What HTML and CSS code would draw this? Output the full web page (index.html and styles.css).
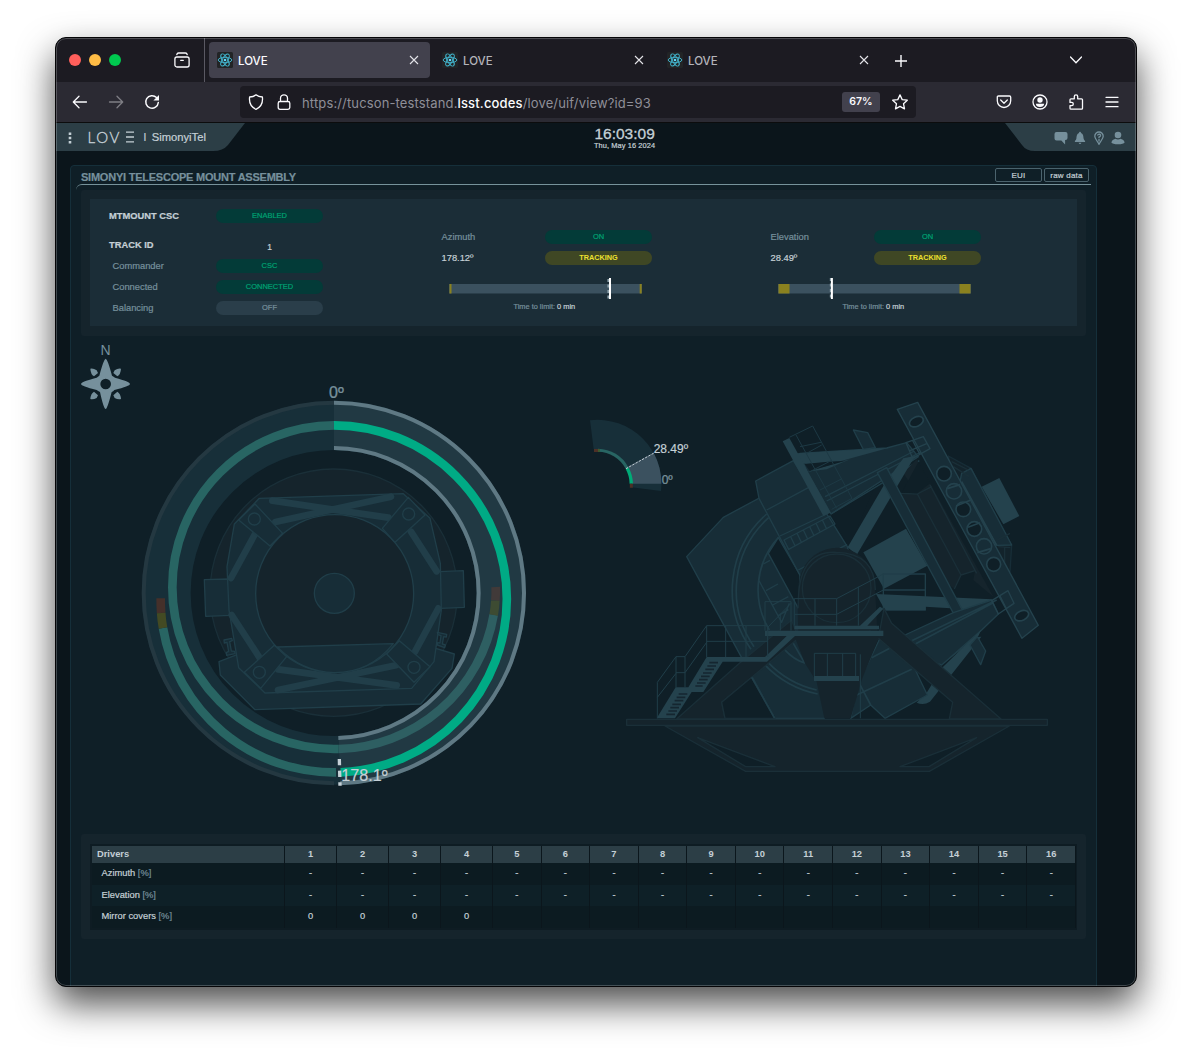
FILE: index.html
```html
<!DOCTYPE html>
<html lang="en">
<head>
<meta charset="utf-8">
<title>LOVE</title>
<link rel="stylesheet" href="styles.css">
</head>
<body>
<svg class="defs" aria-hidden="true">
  <symbol id="atom" viewBox="0 0 16 16">
    <rect width="16" height="16" rx="1.5" fill="#222426"/>
    <g fill="none" stroke="#41b4cd" stroke-width=".95">
      <ellipse cx="8" cy="8" rx="6.8" ry="2.7"/>
      <ellipse cx="8" cy="8" rx="6.8" ry="2.7" transform="rotate(60 8 8)"/>
      <ellipse cx="8" cy="8" rx="6.8" ry="2.7" transform="rotate(120 8 8)"/>
    </g>
    <circle cx="8" cy="8" r="1.3" fill="#61dafb"/>
  </symbol>
  <symbol id="close" viewBox="0 0 10 10"><path d="M1 1l8 8M9 1l-8 8" fill="none" stroke="currentColor" stroke-width="1.1"/></symbol>
</svg>

<div class="window">
  <div class="tabbar">
    <div class="lights"><i class="red"></i><i class="amber"></i><i class="green"></i></div>
    <svg class="recent" viewBox="0 0 16 16"><g fill="none" stroke="#fbfbfe" stroke-width="1.3" stroke-linecap="round"><rect x=".9" y="5" width="14.2" height="10" rx="2"/><path d="M2.8 2.6q.3-1.6 1.8-1.6h6.8q1.5 0 1.8 1.6M6.7 8.3h2.6"/></g></svg>
    <div class="tab active"><svg class="fav"><use href="#atom"/></svg><span>LOVE</span><svg class="x"><use href="#close"/></svg></div>
    <div class="tab"><svg class="fav"><use href="#atom"/></svg><span>LOVE</span><svg class="x"><use href="#close"/></svg></div>
    <div class="tab"><svg class="fav"><use href="#atom"/></svg><span>LOVE</span><svg class="x"><use href="#close"/></svg></div>
    <svg class="plus" viewBox="0 0 12 12"><path d="M6 0v12M0 6h12" stroke="#fbfbfe" stroke-width="1.4"/></svg>
    <svg class="chev" viewBox="0 0 12 12"><path d="M.5 3L6 8.7 11.500 3" fill="none" stroke="#fbfbfe" stroke-width="1.3" stroke-linecap="round"/></svg>
  </div>

  <div class="toolbar">
    <div class="nav">
      <svg viewBox="0 0 16 16"><path d="M14.500 8H1.500M7 2.300L1.300 8 7 13.700" class="line"/></svg>
      <svg viewBox="0 0 16 16" class="off"><path d="M1.500 8h13M9 2.300L14.700 8 9 13.700" class="line"/></svg>
      <svg viewBox="0 0 16 16"><path d="M14.300 8.500a6.300 6.300 0 1 1-1.800-5" class="line thick"/><path d="M15 .9v5.600H9.400z" fill="#fbfbfe"/></svg>
    </div>
    <div class="urlbar">
      <svg viewBox="0 0 16 16"><path d="M8 .8c1.800 1.500 3.800 2.100 6.400 2.200.7 5.800-2 10.300-6.400 12.300C3.600 13.300.9 8.800 1.600 3 4.200 2.900 6.200 2.300 8 .8z" class="line"/></svg>
      <svg viewBox="0 0 16 16"><path d="M4.500 7.500V4.300a3.500 3.500 0 0 1 7 0v3.200M4 7.500h8q1.800 0 1.800 1.800v4.200q0 1.800-1.800 1.800H4q-1.800 0-1.800-1.800V9.300Q2.200 7.500 4 7.500z" class="line"/></svg>
      <span class="url">https://tucson-teststand.<b>lsst.codes</b>/love/uif/view?id=93</span>
      <span class="zoom">67%</span>
      <svg class="star" viewBox="0 0 16 16"><path d="M8 .9l2.200 4.700 5.100.6-3.800 3.500 1 5.200L8 12.400l-4.500 2.500 1-5.200L.7 6.200l5.100-.6z" class="line" stroke-linejoin="round"/></svg>
    </div>
    <div class="tools">
      <svg viewBox="0 0 16 16"><path d="M2.500 2h11q1.200 0 1.200 1.200v3.600a6.700 6.700 0 0 1-13.400 0V3.200Q1.300 2 2.500 2zM4.700 6L8 9.200 11.300 6" class="line"/></svg>
      <svg viewBox="0 0 16 16"><circle cx="8" cy="8" r="7" class="line"/><circle cx="8" cy="6" r="2.700" fill="#fbfbfe"/><path d="M3.800 9.700h8.400q-.5 3.200-4.200 3.200t-4.200-3.200z" fill="#fbfbfe"/></svg>
      <svg viewBox="0 0 16 16"><path d="M2 5.800q0-1 1-1h3.300V2.600a1.700 1.700 0 0 1 3.400 0v2.200H13.500q1 0 1 1v8.400q0 1-1 1H3q-1 0-1-1v-2.600h1.700a1.600 1.600 0 0 0 0-3.200H2z" class="line"/></svg>
      <svg viewBox="0 0 16 16"><path d="M2 3.300h12M2 8h12M2 12.700h12" class="line"/></svg>
    </div>
  </div>

  <div class="page">
    <header class="top">
      <div class="brand">
        <svg class="plate" viewBox="0 0 189 28"><path d="M0 0H189L172 22Q167 28 157 28H0Z" fill="#2c3e46"/></svg>
        <svg class="dots" viewBox="0 0 4 12"><path d="M.7 .5h2.600v2.500H.7zM.7 4.700h2.600v2.500H.7zM.7 8.900h2.600v2.500H.7z" fill="#c3d0d5"/></svg>
        <span class="logo">LOV</span>
        <svg class="bars" viewBox="0 0 8 12"><path d="M0 1.100h8M0 6h8M0 10.900h8" stroke="#c3d0d5" stroke-width="1.400"/></svg>
        <span class="sep">I</span>
        <span class="view">SimonyiTel</span>
      </div>
      <div class="clock"><div class="time">16:03:09</div><div class="date">Thu, May 16 2024</div></div>
      <div class="user">
        <svg class="plate" viewBox="0 0 131 28"><path d="M0 0L17 22Q21 28 30 28H131V0Z" fill="#2c3e46"/></svg>
        <svg viewBox="0 0 14 14"><path d="M2.500 1h9q2 0 2 2v4q0 2-2 2h-.4v4.500L7.300 9.500H2.500Q.5 9.500 .5 7.500V3q0-2 2-2z" fill="#76909c"/></svg>
        <svg viewBox="0 0 14 14"><path d="M7 .7q1 0 1 1.200c2.500 1 2.300 3.700 2.600 5.600.2 1.500 1.600 2 1.600 3.500H1.800c0-1.500 1.400-2 1.600-3.500.3-1.900.1-4.600 2.600-5.600Q6 .7 7 .7zM5.600 11.700h2.800Q8 13 7 13t-1.400-1.300z" fill="#76909c"/></svg>
        <svg viewBox="0 0 14 14"><path d="M7 1a4.200 4.200 0 0 1 4.200 4.300c0 2.500-2.600 4.600-4.200 8-1.600-3.400-4.200-5.500-4.200-8A4.200 4.200 0 0 1 7 1zM5.500 4.400Q6 3.100 7.300 3.200q1.500.4 1.200 1.500Q8.200 5.500 7 6v1.200M7 8v2.500" fill="none" stroke="#76909c" stroke-width="1.300"/></svg>
        <svg viewBox="0 0 14 14"><circle cx="7" cy="4" r="3.300" fill="#76909c"/><path d="M.3 11.200Q1 8.600 4.400 7.800q2.600 1.500 5.200 0 3.400.8 4.100 3.400Q12.500 13.300 7 13.300T.3 11.200z" fill="#76909c"/></svg>
      </div>
    </header>

    <section class="panel">
      <div class="titlebar"><h1>SIMONYI TELESCOPE MOUNT ASSEMBLY</h1><button class="eui">EUI</button><button>raw data</button></div>
      <div class="rule"></div>

      <div class="summary">
        <div class="status">
          <div class="csc">
            <b>MTMOUNT CSC</b><span class="pill ok">ENABLED</span>
            <b>TRACK ID</b><span class="num">1</span>
            <label>Commander</label><span class="pill ok">CSC</span>
            <label>Connected</label><span class="pill ok">CONNECTED</span>
            <label>Balancing</label><span class="pill off">OFF</span>
          </div>
          <div class="axis">
            <div class="pair"><label>Azimuth</label><span class="pill ok">ON</span><span class="val">178.12º</span><span class="pill warn">TRACKING</span></div>
            <svg class="range" viewBox="0 0 193 22"><rect x="0" y="6" width="193" height="9.500" fill="#3b515f"/><path d="M.5 6h2v9.500h-2zM190.700 6h2v9.500h-2z" fill="#8a811f"/><path d="M159.400 1v21" stroke="#8fa3ad" stroke-width="2" stroke-dasharray="3 2.500"/><path d="M161 0v21" stroke="#fff" stroke-width="2"/></svg>
            <p class="limit">Time to limit: <em>0 min</em></p>
          </div>
          <div class="axis">
            <div class="pair"><label>Elevation</label><span class="pill ok">ON</span><span class="val">28.49º</span><span class="pill warn">TRACKING</span></div>
            <svg class="range" viewBox="0 0 193 22"><rect x="0" y="6" width="193" height="9.500" fill="#3b515f"/><path d="M.5 6h11v9.500H.5zM181.500 6h11v9.500h-11z" fill="#8a811f"/><path d="M52.600 0v21" stroke="#8fa3ad" stroke-width="1.500" stroke-dasharray="3 2.500"/><path d="M53.900 0v21" stroke="#fff" stroke-width="2"/></svg>
            <p class="limit">Time to limit: <em>0 min</em></p>
          </div>
        </div>
      </div>

      <div class="diagrams">
        <svg class="azimuth" viewBox="-177 -132 1500 1494">
          <!-- compass -->
          <g transform="translate(-180 -570)" fill="#76909c">
            <text x="107" y="496" font-size="42" text-anchor="middle" class="thin">N</text>
            <path fill-rule="evenodd" d="M107 506Q113 508 126 557Q131 560 135 563Q180 575 180 582Q180 588 133 600Q130 604 125 606Q112 657 107 657Q101 657 90 606Q84 603 80 600Q33 588 33 582Q33 575 80 563Q84 560 88 557Q101 508 107 506ZM107 566A16 16 0 1 0 107 598A16 16 0 1 0 107 566Z"/>
            <path d="M61 536q9-2 19 5l4 8-12 10q-10-6-11-23zM153 536q-9-2-19 5l-4 8 12 10q10-6 11-23zM61 627q9 2 19-3l4-8-12-11q-10 6-11 22zM153 627q-9 2-19-3l-4-8 12-11q10 6 11 22z"/>
          </g>

          <!-- travel rings -->
          <circle cx="611" cy="639" r="502" fill="none" stroke="#172f39" stroke-width="146"/>
          <path d="M612 62A577 577 0 0 1 1188 639A577 577 0 0 1 631 1216L626 1068A429 429 0 0 0 1040 639A429 429 0 0 0 612 210Z" fill="#213943"/>
          <path d="M612 68A571 571 0 0 0 612 1210" fill="none" stroke="#243841" stroke-width="12"/>
          <g fill="none" stroke-width="12" stroke="#5f7984">
            <path d="M612 68A571 571 0 0 1 1182 639A571 571 0 0 1 631 1210"/>
            <path d="M612 204A435 435 0 0 1 1046 639A435 435 0 0 1 625 1074"/>
          </g>

          <!-- telescope seen from above -->
          <g fill="#172d37" stroke="#203e49" stroke-width="4" stroke-linejoin="round">
            <circle cx="611" cy="638" r="371" fill="#15242c" stroke="#1a2f38"/>
            <path d="M271 885L267 845 345 815 900 800 973 822 966 865 872 972 375 989Z"/>
            <path d="M223 599L295 597 299 706 227 709ZM930 575L1000 572 1003 682 932 685Z"/>
            <path d="M388 355L820 341 900 415 931 550 934 690 912 845 845 925 405 939 326 863 297 690 291 560 313 432Z"/>
            <g stroke="#213e49" stroke-width="20" stroke-linecap="round">
              <path d="M427 362L775 413M436 426L783 350M445 868L800 916M444 930L798 856M375 462L303 594M843 455L920 574M305 705L388 832M925 685L855 815" fill="none"/>
            </g>
            <circle cx="614" cy="641" r="237" fill="#15242c"/>
            <path d="M442 801L790 791Q720 878 614 878 515 876 442 801Z"/>
            <path d="M326 420L375 372 458 460 420 498ZM835 352L885 405 795 487 757 445ZM343 877L433 796 470 830 392 925ZM770 822L808 782 900 860 852 907Z"/>
            <circle cx="373" cy="417" r="18"/><circle cx="836" cy="402" r="18"/><circle cx="388" cy="877" r="18"/><circle cx="852" cy="862" r="18"/>
            <circle cx="613" cy="640" r="60"/>
            <path d="M282 780l23-5 2 7-8 3 5 28 10 1 1 7-25 5-1-8 7-4-5-27-8 2zM922 757l28 6-1 8-8-1-4 22 9 3-2 8-22-8 1-7 7 1 3-22-9-3z"/>
          </g>

          <!-- cable wrap -->
          <g fill="none" stroke-width="26">
            <path d="M1091 704A485 485 0 0 1 626 1107" stroke="#2e5f62"/>
            <path d="M626 1107L612 1107A485.500 485.500 0 0 1 127 621.500A485.500 485.500 0 0 1 612 136" stroke="#286563"/>
            <path d="M99 744A520 520 0 0 0 618 1177" stroke="#286563"/>
            <path d="M612 136A519 520.500 0 0 1 1130.500 656.500A519 520.500 0 0 1 632 1177" stroke="#00ab85"/>
            <path d="M92 655Q92 678 93.500 699" stroke="#45302a"/>
            <path d="M93.500 699Q95 722 99 744" stroke="#434a23"/>
            <path d="M1097 621Q1098 642 1096 662" stroke="#413a39"/>
            <path d="M1096 662Q1095 684 1091 705" stroke="#3d4b32"/>
          </g>
          <path d="M628 1137L630 1217" stroke="#c5d0d6" stroke-width="10" stroke-dasharray="19 16"/>
          <text x="597" y="54" font-size="48" fill="#76909c">0º</text>
          <text x="634" y="1203" font-size="48.500" fill="#c5d0d6">178.1º</text>
        </svg>

        <svg class="elevation" viewBox="-207 -162 1575 1494">
          <!-- elevation gauge -->
          <g transform="translate(-210 30)">
            <path d="M60 61A191 191 0 0 1 273 273L184 262 178 250A100 100 0 0 0 71 147Z" fill="#172f39"/>
            <path d="M250.700 158.400A192 192 0 0 1 274 251L186 251Q186 225 170 202Z" fill="#3b515f"/>
            <g fill="none" stroke-width="9">
              <path d="M84 150.500A101 101 0 0 1 171 204" stroke="#286563"/>
              <path d="M171 204A101 101 0 0 1 184 251" stroke="#00ab77" stroke-width="10"/>
              <path d="M72 151.500h12M184 251v12" stroke="#4d3026"/>
              <path d="M84 151.500h6" stroke="#3b5a30"/>
            </g>
            <path d="M168 206L252 159" stroke="#c5d0d6" stroke-width="3" stroke-dasharray="7 4"/>
            <text x="251" y="158" font-size="36" fill="#c5d0d6">28.49º</text>
            <text x="275" y="251" font-size="36" fill="#76909c">0º</text>
          </g>

          <g stroke-linejoin="round" stroke-width="4">
            <!-- mirror cell -->
            <path d="M140 500L250 382 375 315 620 470 700 760 553 985 404 985Z" fill="#172d37" stroke="#203e49"/>
            <g fill="none" stroke="#203e49" stroke-width="5">
              <path d="M380 372A306 306 0 0 0 333 778M386 383A294 294 0 0 0 342 770M415 443A232 232 0 0 0 388 720M373 823A306 306 0 0 0 533 912M384 817A294 294 0 0 0 530 900M433 778Q460 808 494 819L457 755"/>
            </g>
            <path d="M415 443L480 555 475 655 385 490Z" fill="#0f1f27" stroke="#203e49"/>
            <path d="M357 572L425 697 448 640M370 522l20-11M378 602l36-20M398 645l47-25M415 677l30-18" fill="none" stroke="#203e49"/>

            <!-- upper tube -->
            <path d="M347 273L460 212 622 470 640 540 482 560 357 325Z" fill="#172d37" stroke="#203e49"/>
            <path d="M380 360L505 293M420 438L560 372M475 540L622 463M432 450L570 378 585 402 446 478ZM452 440l13 27M471 430l13 27M490 420l13 27M509 410l13 27M528 400l13 27M547 390l13 27" fill="none" stroke="#203e49"/>
            <path d="M573 372L700 300 627 472Z" fill="#0f1f27" stroke="none"/>
            <path d="M480 190L740 174 800 158 835 200 573 372 500 245Z" fill="#172d37" stroke="#203e49"/>
            <path d="M470 190L745 174 600 214 500 222 480 218ZM500 245L630 208 560 238Z" fill="#24424d"/>
            <path d="M494 222l70-7 50-2-105 30z" fill="#0f1f27"/>
            <path d="M555 320L823 183M560 333L870 172M573 372L838 212" fill="none" stroke="#203e49"/>
            <path d="M448 142L518 108 636 325 575 358M468 135L590 355M480 170L543 157M500 190l45-25M510 245l65-34M540 300l66-34" fill="none" stroke="#1d3944" stroke-width="3"/>
            <path d="M428 154L448 144 572 368 550 378Z" fill="#24424d"/>
            <path d="M640 120L683 128 706 173 670 178Z" fill="#172d37" stroke="#203e49"/>

            <!-- primary mirror assembly -->
            <path d="M830 208L1060 620 1000 570 1005 542 963 555 943 597 900 560 783 310 832 312 790 250Z" fill="#15242c"/>
            <path d="M783 310L832 312 875 290M832 312L963 555 1005 542M963 555L943 597M870 285L1010 550" fill="none" stroke="#1a2f38"/>
            <path d="M835 216L870 280 832 310 785 308Z" fill="#0f1f27"/>
            <path d="M790 205L825 198 650 495 623 472 735 280Z" fill="#24424d"/>
            <path d="M670 487L798 416 862 527 732 596Z" fill="#24424d"/>
            <path d="M730 552h126v108h-126zM730 600h126" fill="none" stroke="#203e49"/>
            <path d="M708 612L1055 628 1060 640 1020 660 856 650 856 660 735 660Z" fill="#24424d"/>
            <path d="M712 248L740 233 982 688 955 697Z" fill="#172d37" stroke="#203e49"/>

            <!-- lower truss -->
            <path d="M1000 742L1024 740 870 935Q850 948 830 938L862 905 905 835Z" fill="#24424d"/>
            <path d="M795 735L940 668 1055 630 1075 672 1025 720 905 825 800 790Z" fill="#172d37" stroke="#203e49"/>
            <path d="M1025 718L1000 745 905 825 1015 738Z" fill="#24424d"/>
            <path d="M815 752L1070 630M820 765L1060 638" fill="none" stroke="#203e49" stroke-width="5"/>
            <path d="M990 765L1012 740 1037 783 1022 824Z" fill="#172d37" stroke="#203e49"/>
            <path d="M720 745L825 838 862 915 735 985 692 945 632 985 655 880Z" fill="#172d37" stroke="#203e49"/>
            <path d="M695 803L752 773M650 915L815 838M658 880L692 945" fill="none" stroke="#203e49" stroke-width="5"/>

            <!-- top end -->
            <path d="M925 198L993 235 1115 465 1110 545 1065 535 960 400Z" fill="#13232b" stroke="#172d37"/>
            <path d="M965 250L993 235 1115 465 1070 466 960 275Z" fill="#172d37" stroke="#203e49"/>
            <path d="M1025 290L1078 264 1138 378 1090 403Z" fill="#24424d"/>
            <path d="M935 215l50 25M940 230l48 30M1072 450l38-20M1075 470l36 3M1094 470v65M1070 480l-3 55" fill="none" stroke="#1a2f38"/>
            <path d="M772 58L833 37 1195 706 1146 745Z" fill="#172d37" stroke="#24424d"/>
            <g fill="#0f1f27" stroke="#24424d" stroke-width="5">
              <ellipse cx="829" cy="95" rx="22" ry="14" transform="rotate(-25 829 95)"/>
              <ellipse cx="1145" cy="677" rx="22" ry="14" transform="rotate(-25 1145 677)"/>
              <circle cx="912" cy="251" r="22"/><circle cx="942" cy="304" r="23" fill="#172d37"/><circle cx="970" cy="358" r="22"/><circle cx="1003" cy="417" r="22"/><circle cx="1032" cy="469" r="23" fill="#172d37"/><circle cx="1061" cy="523" r="21"/>
            </g>
            <path d="M922 296l38-12M948 348l43-17M984 412l36-14M1012 488l40-12M965 275L1070 466" fill="none" stroke="#24424d" stroke-width="5"/>
            <path d="M798 158L850 140 870 176 818 205ZM818 152l22 42M810 182l52-22M1055 632L1104 602 1122 640 1075 672ZM1080 618l20 40" fill="none" stroke="#24424d"/>

            <!-- pier -->
            <path d="M110 987L300 818 455 690 475 745 245 937 255 987ZM715 745L732 655 755 700 1083 987 928 987 938 937Z" fill="#15242c" stroke="#1a2f38"/>
            <path d="M245 937L335 862 404 985 255 985Z" fill="#0f1f27" stroke="#1a2f38"/>
            <path d="M335 862L404 985" stroke="#203e49" stroke-width="5"/>
            <path d="M462 735L720 735 665 870 632 985 553 985 530 875 495 820Z" fill="#15242c"/>
            <path d="M475 722Q470 620 480 560A115 118 0 0 1 704 570L712 722Z" fill="#15242c"/>
            <circle cx="590" cy="595" r="103" fill="#15242c" stroke="#1a2f38"/>
            <path d="M475 655Q470 480 590 487 705 490 706 600" fill="none" stroke="#1a2f38"/>

            <!-- base -->
            <path d="M75 1008L317 1144H868L1108 1008Z" fill="#15242c" stroke="#1a2f38"/>
            <path d="M173 1043L317 1130H405ZM1010 1043L867 1130H780Z" fill="#0f1f27" stroke="#1a2f38"/>
            <rect x="-40" y="988" width="1262" height="18" fill="#15242c" stroke="#1a2f38"/>

            <!-- platforms, stairs and rails -->
            <path d="M375 722H730V738H465L381 815H248L190 906H155L105 985H50L107 892H145L200 801H375L440 738H375ZM463 707H717V718H463ZM522 858H657V873H522ZM660 707L720 650 730 656 682 707Z" fill="#24424d"/>
            <path d="M208 818h26M202 828h26M196 838h26M189 849h26M183 859h26M177 869h26M171 879h26M166 888h22M116 912h26M110 922h26M104 932h26M97 943h26M91 953h26M85 963h26M79 973h26" stroke="#152630" stroke-width="5"/>
            <path d="M200 801V707H383V801M200 754H383M257 707V801M318 707V801M200 707L135 800H108V893M135 800V893M108 848H135L200 757M108 800L52 877V985M108 850L52 922M375 722V635H453V722M383 712L453 640M421 670V722M463 707V626H590V707M525 626V707M463 673H590L730 600M590 626L730 552M655 590V707M523 858V790H647V858M562 790V858M608 790V858M661 793V985" fill="none" stroke="#203e49" stroke-width="3"/>
          </g>
        </svg>
      </div>

      <div class="drivers">
        <table>
          <colgroup><col class="name"><col class="w"><col class="w"><col class="w"><col class="w"><col><col><col><col><col><col><col><col><col><col><col><col></colgroup>
          <thead><tr><th>Drivers</th><th>1</th><th>2</th><th>3</th><th>4</th><th>5</th><th>6</th><th>7</th><th>8</th><th>9</th><th>10</th><th>11</th><th>12</th><th>13</th><th>14</th><th>15</th><th>16</th></tr></thead>
          <tbody>
            <tr><td>Azimuth <i>[%]</i></td><td>-</td><td>-</td><td>-</td><td>-</td><td>-</td><td>-</td><td>-</td><td>-</td><td>-</td><td>-</td><td>-</td><td>-</td><td>-</td><td>-</td><td>-</td><td>-</td></tr>
            <tr><td>Elevation <i>[%]</i></td><td>-</td><td>-</td><td>-</td><td>-</td><td>-</td><td>-</td><td>-</td><td>-</td><td>-</td><td>-</td><td>-</td><td>-</td><td>-</td><td>-</td><td>-</td><td>-</td></tr>
            <tr><td>Mirror covers <i>[%]</i></td><td>0</td><td>0</td><td>0</td><td>0</td><td></td><td></td><td></td><td></td><td></td><td></td><td></td><td></td><td></td><td></td><td></td><td></td></tr>
          </tbody>
        </table>
      </div>
    </section>
  </div>
</div>
</body>
</html>
```
FILE: styles.css
```css
* { box-sizing: border-box; }
html, body { height: 100%; }
body {
  margin: 0;
  overflow: hidden;
  background: #fff;
  font-family: "Liberation Sans", Arial, sans-serif;
  font-size: 9.33px;
  color: #c5d0d6;
}
svg { display: block; flex: none; }
.defs { position: absolute; width: 0; height: 0; }

/* browser window */
.window {
  position: relative;
  width: 1082px;
  height: 950px;
  margin: 37px 0 0 55px;
  border: 1px solid #050507;
  border-radius: 11px;
  overflow: hidden;
  background: #0b151b;
  box-shadow: 0 17px 36px rgba(0, 0, 0, .7);
  display: flex;
  flex-direction: column;
}
.window::after {
  content: "";
  position: absolute;
  inset: 0;
  border: 1px solid rgba(255, 255, 255, .22);
  border-radius: 10px;
  pointer-events: none;
}

.tabbar {
  display: flex;
  align-items: center;
  height: 44px;
  background: #1c1b22;
  font: 500 11.5px Inter, sans-serif;
  color: #b4b4ba;
}
.lights { display: flex; gap: 8px; margin-left: 13px; width: 105px; }
.lights i { width: 12px; height: 12px; border-radius: 50%; }
.red { background: #ff5f5b; }
.amber { background: #ffbc45; }
.green { background: #00c94f; }
.recent { width: 16px; height: 16px; }
.tab {
  display: flex;
  align-items: center;
  width: 221px;
  height: 36px;
  margin-right: 4px;
  padding: 0 11px 0 8px;
  border-radius: 4px;
}
.tab.active { background: #42414d; color: #fbfbfe; margin-left: 19px; }
.recent + .tab::before {
  content: "";
  align-self: stretch;
  width: 1px;
  margin: -4px 12px -4px -13px;
  background: #5a5963;
}
.fav { width: 16px; height: 16px; margin-right: 5px; }
.tab span { flex: 1; padding-top: 2px; }
.x { width: 10px; height: 10px; color: #e3e3e8; }
.plus { width: 12px; height: 12px; margin: 1px 0 0 11px; }
.chev { width: 12px; height: 12px; margin-left: 163px; }

.toolbar {
  display: flex;
  align-items: center;
  height: 41px;
  border-bottom: 1px solid #0c0c0d;
  background: #2b2a33;
}
.toolbar svg { width: 16px; height: 16px; }
.line { fill: none; stroke: #fbfbfe; stroke-width: 1.3; stroke-linecap: round; stroke-linejoin: round; }
.line.thick { stroke-width: 1.5; }
.off { opacity: .4; }
.nav { display: flex; gap: 20px; margin-left: 16px; width: 168px; }
.urlbar {
  display: flex;
  align-items: center;
  width: 676px;
  height: 32px;
  padding: 0 8px;
  gap: 12px;
  border-radius: 4px;
  background: #1c1b22;
}
.url { flex: 1; margin-left: -2px; font: 13px Inter, sans-serif; letter-spacing: .14px; color: #8f8f98; white-space: nowrap; padding-top: 1px; }
.url b { font-weight: 500; color: #fbfbfe; }
.zoom { width: 38px; height: 20px; border-radius: 3px; background: #42414d; color: #fbfbfe; font: 600 10.500px/20px Inter, sans-serif; text-align: center; }
.tools { display: flex; gap: 20px; margin-left: 80px; }

/* page header */
.page { flex: 1; min-height: 0; overflow: hidden; -webkit-text-stroke: .2px currentColor; }
.top { display: flex; justify-content: space-between; height: 28px; }
.brand, .user { position: relative; display: flex; align-items: center; height: 28px; }
.brand { width: 189px; padding-left: 11.5px; }
.user { width: 131px; padding: 2px 0 0 49px; gap: 5px; }
.user > svg { width: 14px; height: 14px; }
.brand > *, .user > * { position: relative; }
.brand > .plate, .user > .plate { position: absolute; left: 0; top: 0; width: 100%; height: 28px; }
.dots { width: 4px; height: 12px; margin-top: 1px; }
.logo { width: 38.5px; margin: 0 0 0 16px; font: 300 15px/28px Lato, sans-serif; letter-spacing: 1.7px; -webkit-text-stroke-width: .35px; }
.bars { width: 8px; height: 12px; margin-top: 0; }
.sep { margin-left: 9.5px; font-size: 10px; }
.view { margin-left: 5.5px; font-size: 11.2px; }
.clock { padding-left: 58px; margin-right: auto; margin-left: 291px; text-align: center; }
.time { height: 18px; font-size: 15.5px; line-height: 21px; -webkit-text-stroke-width: .3px; }
.date { font-size: 7.4px; line-height: 9px; letter-spacing: .1px; }

/* view panel */
.panel { width: 1027px; height: 900px; margin: 14px 0 0 14px; border: 1px solid #152f3a; border-radius: 4px; background: #0f1f27; }
.titlebar { display: flex; align-items: center; height: 18px; padding: 0 7px 0 10px; gap: 2px; }
h1 { flex: 1; margin: 4px 0 0; font-size: 11px; line-height: 14px; color: #76909c; white-space: nowrap; letter-spacing: -.23px; }
button { width: 45px; height: 14px; padding: 0; border: 1px solid #4b636d; border-radius: 2px; background: transparent; color: #c5d0d6; font: 8px/11px "Liberation Sans", Arial, sans-serif; letter-spacing: .2px; }
.eui { width: 47px; }
.rule { height: 6px; margin: 0 5px; border-top: 1px solid #76929a; border-radius: 6px 0 0 0; }

.summary { height: 146px; margin: 0 10px; padding: 9px; border-radius: 3px; background: #15242c; }
.status { display: grid; grid-template-columns: 351px 329px 307px; height: 127px; background: #1b2d37; }
label { color: #76909c; }
.csc { display: grid; grid-template-columns: 107px 107px; grid-template-rows: 27px 23px 20px 21px 21px; padding: 7px 0 0 19px; align-content: start; align-items: center; }
.csc > * { white-space: nowrap; }
.csc > :first-child, .csc > :nth-child(2) { align-self: start; margin-top: 3px; }
.csc b { line-height: 14px; }
.csc label { padding-left: 3.5px; }
.num { text-align: center; padding-top: 5px; font-size: 8.5px; }
.pill { height: 14px; border-radius: 7px; text-align: center; font-size: 7.5px; line-height: 13.5px; }
.ok { background: #033b38; color: #00a172; }
.off.pill { background: #2a3e4a; color: #76909c; opacity: 1; }
.warn { background: #3f4724; color: #ece02f; font-weight: bold; font-size: 7.3px; -webkit-text-stroke-width: 0; }
.axis { padding-top: 31px; }
.pair { display: grid; grid-template-columns: 104px 107px; grid-template-rows: 14px 14px; row-gap: 7px; line-height: 14px; }
.pair label, .val { padding-left: .5px; }
.range { width: 193px; height: 22px; margin: 13px 0 0 7.5px; }
.limit { width: 208px; margin: 2px 0 0 -.7px; font-size: 7.4px; line-height: 9px; color: #76909c; text-align: center; }
.limit em { font-style: normal; color: #c5d0d6; }

.diagrams { display: flex; height: 498px; }
.azimuth { width: 500px; height: 498px; }
.elevation { width: 525px; height: 498px; }
.diagrams text { font-family: "Liberation Sans", Arial, sans-serif; -webkit-text-stroke: 0; stroke: currentColor; stroke-width: 0; }
.diagrams text:not(.thin) { paint-order: stroke; stroke: #9fb0b8; stroke-width: .7px; }

/* driver table */
.drivers { height: 105px; margin: 0 10px; padding: 10px 9px; border-radius: 3px; background: #15242c; }
table { width: 987px; border: 2px solid #0e1c23; border-right-width: 1px; border-collapse: separate; border-spacing: 0; table-layout: fixed; background: #0c1b21; }
.name { width: 193px; }
.w { width: 52px; }
th, td { height: 21.5px; padding: 0 0 1px; border-right: 1px solid #0b161c; text-align: center; }
th { height: 17px; background: #2c3e46; -webkit-text-stroke-width: 0; }
th:first-child { text-align: left; padding-left: 5px; }
td:first-child { text-align: left; padding-left: 9.5px; }
td i { font-style: normal; color: #76909c; }
tbody tr:nth-child(2) { background: #0e2027; }
```
